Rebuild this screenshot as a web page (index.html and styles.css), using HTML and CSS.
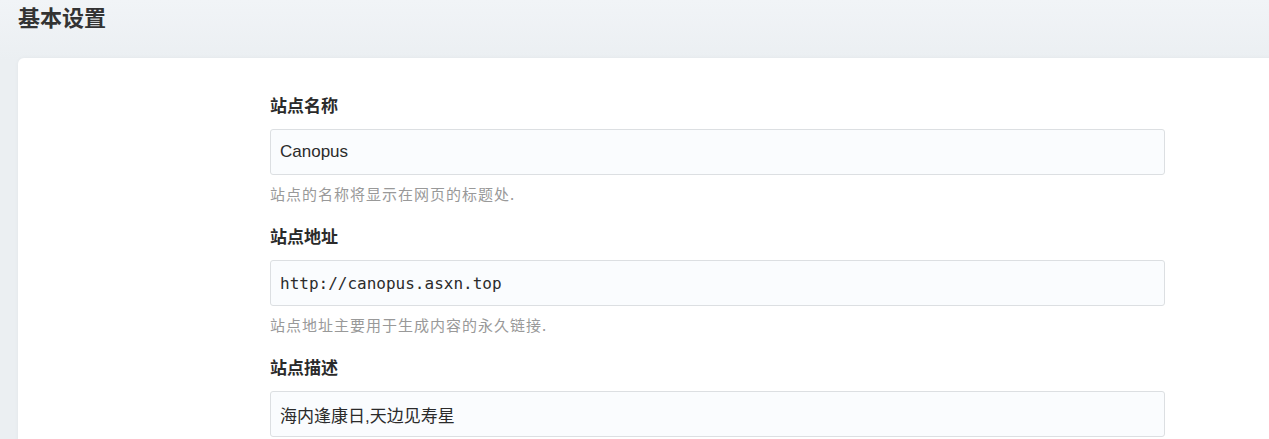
FILE: index.html
```html
<!DOCTYPE html>
<html lang="zh">
<head>
<meta charset="utf-8">
<title>基本设置</title>
<link rel="stylesheet" href="styles.css">
</head>
<body>
<div class="page">
  <h1 class="page-title">基本设置</h1>
  <div class="card">
    <form class="form">
      <div class="field">
        <label class="label">站点名称</label>
        <input class="input" type="text" value="Canopus">
        <p class="help">站点的名称将显示在网页的标题处.</p>
      </div>
      <div class="field">
        <label class="label">站点地址</label>
        <input class="input mono" type="text" value="http://canopus.asxn.top">
        <p class="help">站点地址主要用于生成内容的永久链接.</p>
      </div>
      <div class="field">
        <label class="label">站点描述</label>
        <input class="input" type="text" value="海内逢康日,天边见寿星">
      </div>
    </form>
  </div>
</div>
</body>
</html>
```
FILE: styles.css
```css
html, body {
  margin: 0;
  padding: 0;
}
body {
  background: linear-gradient(180deg, #f1f4f7 0%, #ebeff2 60px, #ebeff2 100%);
  font-family: "Noto Sans CJK SC", "Liberation Sans", sans-serif;
  color: #333;
  overflow: hidden;
  height: 439px;
}
.page {
  padding: 0 0 0 18px;
}
.page-title {
  margin: 0;
  font-size: 22px;
  line-height: 33px;
  font-weight: 700;
  color: #333;
}
.card {
  margin-top: 25px;
  margin-right: -40px;
  background: #fff;
  border-radius: 6px;
  box-shadow: 0 0 4px rgba(0, 0, 0, 0.04);
  padding: 35px 0 0 252px;
  height: 400px;
  box-sizing: border-box;
}
.form {
  width: 895px;
}
.field {
  margin-bottom: 20px;
}
.label {
  display: block;
  font-size: 17px;
  line-height: 24px;
  font-weight: 700;
  color: #2b2b2b;
  margin-bottom: 12px;
}
.input {
  display: block;
  box-sizing: border-box;
  width: 100%;
  height: 46px;
  margin: 0;
  padding: 0 9px;
  border: 1px solid #dcdfe2;
  border-radius: 3px;
  background: #fafcfe;
  font-family: "Liberation Sans", "Noto Sans CJK SC", sans-serif;
  font-size: 17px;
  color: #2b2b2b;
  outline: none;
}
.input.mono {
  font-family: "DejaVu Sans Mono", "Liberation Mono", monospace;
  font-size: 16px;
}
.help {
  margin: 8px 0 0;
  font-size: 15px;
  letter-spacing: 1px;
  line-height: 21px;
  color: #999;
}
```
